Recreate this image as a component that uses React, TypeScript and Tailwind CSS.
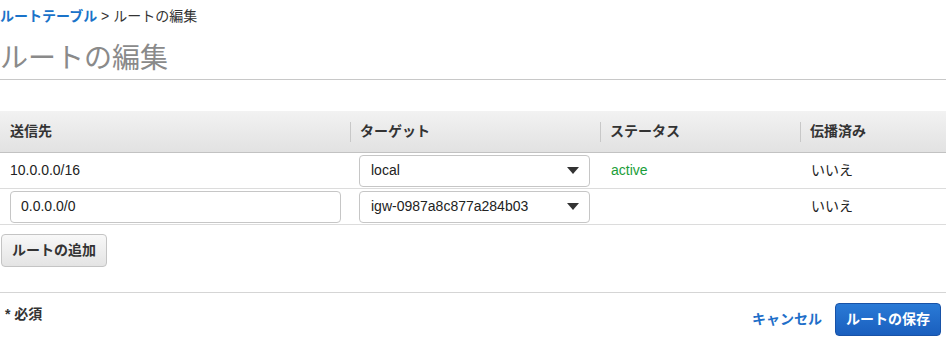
import React from 'react';

const font = { fontFamily: '"Liberation Sans", "Noto Sans CJK JP", sans-serif' };

const Caret = () => (
  <svg width="12" height="7" viewBox="0 0 12 7" className="shrink-0">
    <path d="M0 0h12L6 7z" fill="#333" />
  </svg>
);

const SelectBox: React.FC<{ value: string }> = ({ value }) => (
  <div className="flex h-[32px] w-[231px] items-center justify-between rounded-[4px] border border-[#c6c6c6] bg-white pl-[11px] pr-[10px] text-[14px] text-[#222]">
    <span>{value}</span>
    <Caret />
  </div>
);

const HeaderCell: React.FC<{ label: string; sep?: boolean; w: string }> = ({ label, sep, w }) => (
  <div className={`flex h-full items-center ${w}`}>
    {sep && <div className="mr-[9px] h-[20px] w-px bg-[#c8c8c8]" />}
    <span className={sep ? '' : 'pl-[10px]'}>{label}</span>
  </div>
);

export default function App() {
  return (
    <div className="h-[347px] w-[946px] overflow-hidden bg-white text-[#222]" style={font}>
      {/* Breadcrumb */}
      <div className="pt-[7px] text-[14px] leading-[18px]">
        <span className="font-bold text-[#1a73c9]">ルートテーブル</span>
        <span className="text-[#333]"> &gt; ルートの編集</span>
      </div>

      {/* Title */}
      <h1 className="mt-[18px] border-b border-[#c8c8c8] pb-[4px] text-[28px] font-normal leading-[32px] text-[#8a8a8a]">
        ルートの編集
      </h1>

      {/* Table */}
      <div className="mt-[31px]">
        <div className="flex h-[42px] border-b border-[#c2c2c2] bg-gradient-to-b from-[#f2f2f2] to-[#e2e2e2] text-[14px] font-bold text-[#333]">
          <HeaderCell label="送信先" w="w-[350px]" />
          <HeaderCell label="ターゲット" sep w="w-[250px]" />
          <HeaderCell label="ステータス" sep w="w-[200px]" />
          <HeaderCell label="伝播済み" sep w="flex-1" />
        </div>

        <div className="flex h-[36px] items-center border-b border-[#dcdcdc] text-[14px]">
          <div className="w-[359px] pl-[10px]">10.0.0.0/16</div>
          <div className="w-[252px]">
            <SelectBox value="local" />
          </div>
          <div className="w-[200px] text-[#1a9e3a]">active</div>
          <div className="flex-1">いいえ</div>
        </div>

        <div className="flex h-[36px] items-center border-b border-[#dcdcdc] text-[14px]">
          <div className="w-[359px] pl-[10px]">
            <div className="flex h-[32px] w-[331px] items-center rounded-[4px] border border-[#c6c6c6] bg-white pl-[10px]">
              0.0.0.0/0
            </div>
          </div>
          <div className="w-[252px]">
            <SelectBox value="igw-0987a8c877a284b03" />
          </div>
          <div className="w-[200px]" />
          <div className="flex-1">いいえ</div>
        </div>
      </div>

      {/* Add route */}
      <div className="mt-[9px] pl-[1px]">
        <button className="h-[33px] rounded-[4px] border border-[#c4c4c4] bg-gradient-to-b from-[#f8f8f8] to-[#e4e4e4] px-[10px] text-[14px] font-bold text-[#333]">
          ルートの追加
        </button>
      </div>

      {/* Footer */}
      <div className="mt-[25px] flex border-t border-[#d5d5d5] pt-[10px]">
        <div className="flex-1 pl-[5px] pt-[1px] text-[14px] font-bold text-[#333]">* 必須</div>
        <div className="flex items-center gap-[13px] pr-[5px]">
          <button className="text-[14px] font-bold text-[#1f6fc9]">キャンセル</button>
          <button className="h-[33px] rounded-[4px] border border-[#1852a7] bg-gradient-to-b from-[#2a7ad6] to-[#1a5fbe] px-[10px] text-[14px] font-bold text-white">
            ルートの保存
          </button>
        </div>
      </div>
    </div>
  );
}
